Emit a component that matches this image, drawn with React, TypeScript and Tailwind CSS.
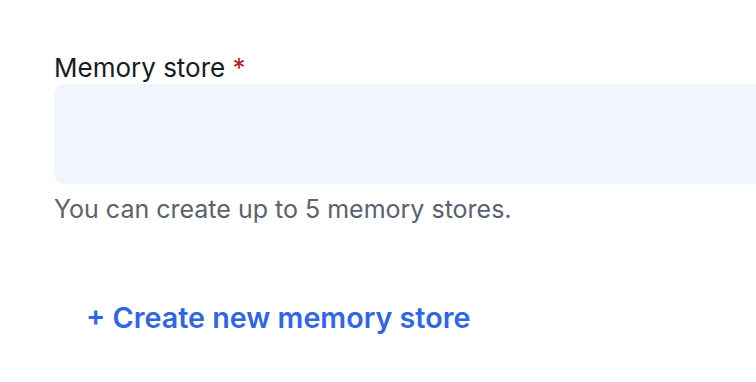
import React from "react";

export default function App() {
  return (
    <div
      className="w-[756px] h-[382px] overflow-hidden bg-white pl-[54px] pt-[52px]"
      style={{ fontFamily: "Inter, 'Noto Sans', sans-serif" }}
    >
      <label className="block text-[26px] leading-[32px] text-[#161b26]">
        Memory store <span className="text-[#b42318]">*</span>
      </label>
      <div className="w-[760px] h-[100px] rounded-[10px] bg-[#f0f5fe]" />
      <p className="mt-[9px] text-[25px] leading-[32px] text-[#5b6170]">
        You can create up to 5 memory stores.
      </p>
      <button className="mt-[75px] ml-[32px] text-[28.7px] leading-[36px] font-semibold text-[#2f66e6]">
        + Create new memory store
      </button>
    </div>
  );
}
